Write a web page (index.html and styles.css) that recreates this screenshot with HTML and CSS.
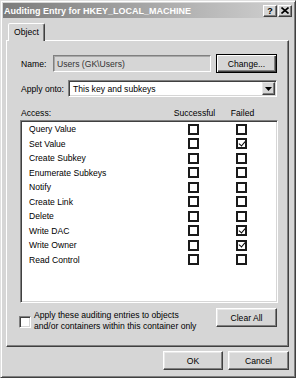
FILE: index.html
```html
<!DOCTYPE html>
<html lang="en">
<head>
    <meta charset="UTF-8">
    <title>Auditing Entry for HKEY_LOCAL_MACHINE</title>
    <link rel="stylesheet" href="styles.css">
</head>
<body>

<div class="window">
    <div class="titlebar">
        <span class="title">Auditing Entry for HKEY_LOCAL_MACHINE</span>
        <div class="caption-btns">
            <span class="cbtn">?</span>
            <span class="cbtn close">
                <svg width="8" height="7" viewBox="0 0 8 7"><path d="M0.5 0.5 L7.5 6.5 M7.5 0.5 L0.5 6.5" stroke="#000" stroke-width="1.6"/></svg>
            </span>
        </div>
    </div>

    <div class="content">
        <div class="tabs">
            <div class="tab">Object</div>
        </div>

        <div class="panel">
            <div class="name-row">
                <span class="name-lbl">Name:</span>
                <div class="field">Users (GK\Users)</div>
                <button class="btn default">Change...</button>
            </div>

            <div class="apply-row">
                <span class="apply-lbl">Apply onto:</span>
                <div class="combo">
                    <span class="combo-text">This key and subkeys</span>
                    <span class="drop">
                        <svg width="7" height="4" viewBox="0 0 7 4"><path d="M0 0 H7 L3.5 4 Z" fill="#000"/></svg>
                    </span>
                </div>
            </div>

            <div class="access-head">
                <span>Access:</span>
                <span class="col">Successful</span>
                <span></span>
                <span class="col">Failed</span>
            </div>

            <div class="list">
                <div class="item"><span>Query Value</span><span class="box"></span><span class="box"></span></div>
                <div class="item"><span>Set Value</span><span class="box"></span><span class="box checked"></span></div>
                <div class="item"><span>Create Subkey</span><span class="box"></span><span class="box"></span></div>
                <div class="item"><span>Enumerate Subkeys</span><span class="box"></span><span class="box"></span></div>
                <div class="item"><span>Notify</span><span class="box"></span><span class="box"></span></div>
                <div class="item"><span>Create Link</span><span class="box"></span><span class="box"></span></div>
                <div class="item"><span>Delete</span><span class="box"></span><span class="box"></span></div>
                <div class="item"><span>Write DAC</span><span class="box"></span><span class="box checked"></span></div>
                <div class="item"><span>Write Owner</span><span class="box"></span><span class="box checked"></span></div>
                <div class="item"><span>Read Control</span><span class="box"></span><span class="box"></span></div>
            </div>

            <div class="bottom-row">
                <span class="chk3d"></span>
                <span class="apply-text">Apply these auditing entries to objects<br>and/or containers within this container only</span>
                <button class="btn clear">Clear All</button>
            </div>
        </div>

        <div class="footer">
            <button class="btn ok">OK</button>
            <button class="btn cancel">Cancel</button>
        </div>
    </div>
</div>

</body>
</html>
```

FILE: styles.css
```css
body {
    margin: 0;
    padding: 0;
    font-family: "Liberation Sans", Arial, sans-serif;
    font-size: 8.6px;
    color: #000;
    background: #d6d6d6;
}
.window {
    width: 296px;
    height: 378px;
    box-sizing: border-box;
    padding: 2px;
    background: #d6d6d6;
    border: 1px solid;
    border-color: #e0e0e0 #404040 #404040 #e0e0e0;
    box-shadow: inset 1px 1px #fff, inset -1px -1px #808080;
}
.titlebar {
    height: 15px;
    display: flex;
    align-items: center;
    justify-content: space-between;
    background: linear-gradient(to right, #7c7c7c, #d2d2d2);
}
.title {
    color: #fff;
    font-weight: bold;
    font-size: 9px;
    padding-left: 1px;
    white-space: nowrap;
}
.caption-btns {
    display: flex;
    gap: 1px;
    margin-right: 1px;
}
.cbtn {
    width: 14px;
    height: 12px;
    box-sizing: border-box;
    display: flex;
    align-items: center;
    justify-content: center;
    font-weight: bold;
    font-size: 9px;
    background: #d6d6d6;
    border: 1px solid;
    border-color: #fff #404040 #404040 #fff;
    box-shadow: inset -1px -1px #808080;
}
.content {
    padding: 0 4px 0 3px;
}
.tabs {
    display: flex;
    margin-top: 5px;
    padding-left: 2px;
}
.tab {
    width: 37px;
    height: 18px;
    box-sizing: border-box;
    margin-bottom: -1px;
    padding-top: 3px;
    text-align: center;
    background: #d6d6d6;
    border: 1px solid;
    border-bottom: none;
    border-color: #fff #404040 transparent #fff;
    border-radius: 2px 2px 0 0;
    box-shadow: inset -1px 0 #808080;
    position: relative;
}
.panel {
    height: 307px;
    box-sizing: border-box;
    padding: 13px 11px 0 14px;
    border: 1px solid;
    border-color: #fff #404040 #404040 #fff;
    box-shadow: inset -1px -1px #808080;
}
.btn {
    font-family: inherit;
    font-size: inherit;
    color: #000;
    height: 19px;
    box-sizing: border-box;
    padding: 0;
    background: #d6d6d6;
    border: 1px solid;
    border-color: #fff #404040 #404040 #fff;
    box-shadow: inset -1px -1px #808080, inset 1px 1px #e8e8e8;
}
.btn.default {
    border-color: #000;
    box-shadow: inset 1px 1px #fff, inset -1px -1px #404040, inset -2px -2px #808080;
}
.name-row {
    display: flex;
    align-items: center;
    height: 19px;
}
.name-lbl {
    width: 32px;
}
.field {
    width: 158px;
    height: 17px;
    box-sizing: border-box;
    padding: 3px 0 0 3px;
    color: #333;
    border: 1px solid;
    border-color: #808080 #fff #fff #808080;
    box-shadow: inset 1px 1px #a8a8a8;
}
.name-row .btn {
    width: 61px;
    margin-left: 5px;
}
.apply-row {
    display: flex;
    align-items: center;
    margin-top: 7px;
}
.apply-lbl {
    width: 47px;
}
.combo {
    width: 209px;
    height: 17px;
    box-sizing: border-box;
    display: flex;
    align-items: center;
    justify-content: space-between;
    background: #fff;
    border: 1px solid;
    border-color: #808080 #fff #fff #808080;
    box-shadow: inset 1px 1px #404040, inset -1px -1px #d6d6d6;
}
.combo-text {
    padding-left: 4px;
}
.drop {
    width: 13px;
    height: 13px;
    margin-right: 1px;
    box-sizing: border-box;
    display: flex;
    align-items: center;
    justify-content: center;
    background: #d6d6d6;
    border: 1px solid;
    border-color: #e8e8e8 #404040 #404040 #e8e8e8;
    box-shadow: inset -1px -1px #808080;
}
.access-head {
    display: grid;
    grid-template-columns: 168px 11px 37px 11px;
    height: 13px;
    align-items: center;
    margin-top: 9px;
}
.col {
    display: flex;
    justify-content: center;
    white-space: nowrap;
}
.list {
    height: 183px;
    width: 258px;
    box-sizing: border-box;
    margin: 1px 0 0 -1px;
    padding: 1px 0 0 8px;
    background: #fff;
    border: 1px solid;
    border-color: #808080 #fff #fff #808080;
    box-shadow: inset 1px 1px #404040, inset -1px -1px #d6d6d6;
}
.item {
    display: grid;
    grid-template-columns: 159px 48px 11px;
    height: 14.5px;
    align-items: center;
}
.box {
    width: 11px;
    height: 11px;
    box-sizing: border-box;
    border: 2px solid #1a1a1a;
    background: #fff;
    display: flex;
    align-items: center;
    justify-content: center;
}
.box.checked::after {
    content: "";
    width: 3px;
    height: 5px;
    margin-top: -2px;
    border: solid #000;
    border-width: 0 1.5px 1.5px 0;
    transform: rotate(40deg);
}
.bottom-row {
    display: flex;
    align-items: flex-start;
    margin-top: 5px;
}
.chk3d {
    width: 12px;
    height: 12px;
    box-sizing: border-box;
    margin: 8px 0 0 -2px;
    background: #fff;
    border: 1px solid;
    border-color: #808080 #fff #fff #808080;
    box-shadow: inset 1px 1px #404040, inset -1px -1px #d6d6d6;
}
.apply-text {
    margin: 2px 0 0 3px;
    line-height: 11px;
}
.btn.clear {
    width: 61px;
    margin-left: auto;
}
.footer {
    display: flex;
    justify-content: flex-end;
    gap: 5px;
    margin-top: 4px;
}
.btn.ok {
    width: 60px;
}
.btn.cancel {
    width: 61px;
}
```
